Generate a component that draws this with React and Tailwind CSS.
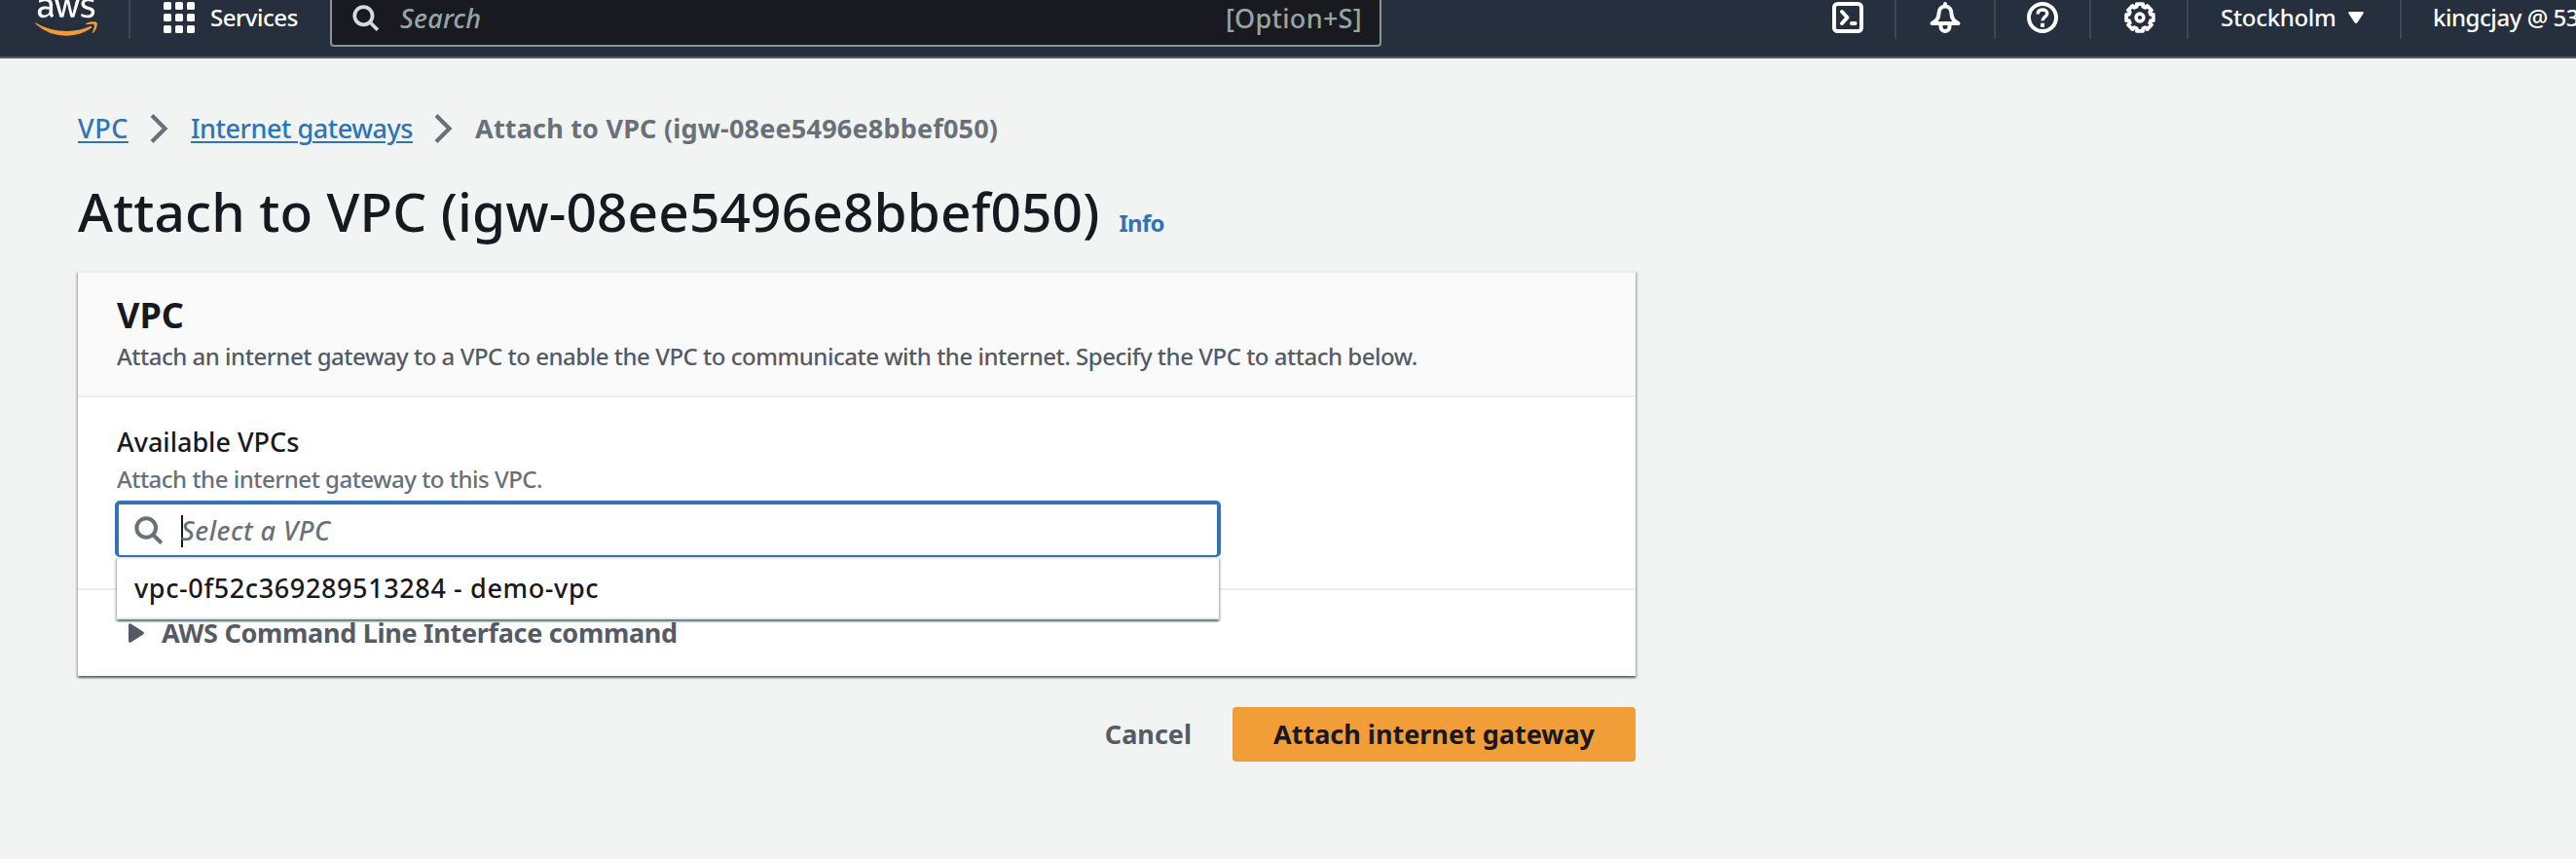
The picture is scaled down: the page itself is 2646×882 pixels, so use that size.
import React from 'react';
import { FaAws } from 'react-icons/fa6';

function Divider() {
  return <div className="h-10 w-[2px] shrink-0 bg-[#414750]" />;
}

function Chevron() {
  return (
    <svg width="20" height="30" viewBox="0 0 20 30" fill="none" stroke="#687078" strokeWidth="4.2">
      <path d="M2 1.5 L15.5 15 L2 28.5" />
    </svg>
  );
}

function SearchIcon({ className }) {
  return (
    <svg width="30" height="30" viewBox="0 0 30 30" fill="none" stroke="currentColor" strokeWidth="4" className={className}>
      <circle cx="12.2" cy="12" r="9.8" />
      <path d="M19.2 19 L27.8 27.6" />
    </svg>
  );
}

function GridIcon() {
  const cells = [0, 12, 24];
  return (
    <svg width="32" height="32" viewBox="0 0 32 32" fill="#fff">
      {cells.map((y) => cells.map((x) => <rect key={`${x}-${y}`} x={x} y={y} width="8" height="8" rx="1.6" />))}
    </svg>
  );
}

function LineIcon({ children }) {
  return (
    <svg
      width="32"
      height="32"
      viewBox="0 0 32 32"
      fill="none"
      stroke="#fff"
      strokeWidth="4"
      strokeLinecap="round"
      strokeLinejoin="round"
      className="block shrink-0 overflow-visible"
    >
      {children}
    </svg>
  );
}

function TerminalIcon() {
  return (
    <LineIcon>
      <rect x="2" y="2" width="28" height="28" rx="3.5" />
      <path d="M10 10 L15.5 16 L10 22" />
      <path d="M20 22 H23.5" />
    </LineIcon>
  );
}

function BellIcon() {
  return (
    <LineIcon>
      <path d="M16 4 V2" />
      <path d="M2.5 22 C7.5 19.5 9.5 16.5 9.5 12 C9.5 7.5 12.2 4.4 16 4.4 C19.8 4.4 22.5 7.5 22.5 12 C22.5 16.5 24.5 19.5 29.5 22 Z" />
      <path d="M11.5 23 V25.5 A4.5 4.5 0 0 0 20.5 25.5 V23" />
    </LineIcon>
  );
}

function HelpIcon() {
  return (
    <LineIcon>
      <circle cx="16" cy="16" r="14" />
      <path d="M11.2 12.4 C11.2 9.4 13.2 8 16 8 C18.8 8 20.8 9.6 20.8 12 C20.8 15.4 16 15.4 16 19.2" strokeWidth="3.4" strokeLinecap="butt" />
      <path d="M16 21.8 V25.8" strokeLinecap="butt" />
    </LineIcon>
  );
}

const gearPoints = Array.from({ length: 8 })
  .flatMap((_, k) =>
    [
      [-16, 11.6],
      [-13, 14.2],
      [13, 14.2],
      [16, 11.6],
    ].map(([offset, radius]) => {
      const a = ((k * 45 + offset) * Math.PI) / 180;
      return `${(16 + radius * Math.sin(a)).toFixed(2)},${(16 - radius * Math.cos(a)).toFixed(2)}`;
    })
  )
  .join(' ');

function GearIcon() {
  return (
    <LineIcon>
      <polygon points={gearPoints} strokeWidth="3.8" />
      <circle cx="16" cy="16" r="3.9" strokeWidth="3.6" />
    </LineIcon>
  );
}

function AwsLogo() {
  return (
    <div className="ml-9 h-10 w-16 shrink-0">
      <div className="h-5 overflow-hidden text-white">
        <FaAws className="-mt-2 h-[51px] w-16" />
      </div>
      <div className="h-5 overflow-hidden text-[#ef9c38]">
        <FaAws className="-mt-7 h-[51px] w-16" />
      </div>
    </div>
  );
}

function TopBar() {
  return (
    <header className="flex h-[60px] items-start overflow-hidden border-b-2 border-[#545b64] bg-[#262f3e] text-2xl font-medium text-white">
      <AwsLogo />
      <div className="ml-8 flex">
        <Divider />
      </div>
      <div className="ml-[34px] flex h-9 w-[171px] shrink-0 items-center gap-4">
        <GridIcon />
        <span className="tracking-[-0.45px]">Services</span>
      </div>
      <div className="h-12 w-[1080px] shrink-0 rounded-b-[4px] border-2 border-t-0 border-[#879596] bg-[#191a1f]">
        <div className="flex h-9 items-center pt-px pr-[18px] pl-[21px] text-[27px] text-[#95a5a6]">
          <SearchIcon className="size-7 text-[#d5dbdb]" />
          <span className="ml-[21px] tracking-[0.2px] italic">Search</span>
          <span className="ml-auto tracking-[0.3px]">[Option+S]</span>
        </div>
      </div>
      <div className="flex h-10 shrink-0">
        <div className="ml-[463px] flex h-9 items-center">
          <TerminalIcon />
        </div>
        <div className="ml-8 flex">
          <Divider />
        </div>
        <div className="ml-[34px] flex h-9 items-center">
          <BellIcon />
        </div>
        <div className="ml-[34px] flex">
          <Divider />
        </div>
        <div className="ml-8 flex h-9 items-center">
          <HelpIcon />
        </div>
        <div className="ml-8 flex">
          <Divider />
        </div>
        <div className="ml-[34px] flex h-9 items-center">
          <GearIcon />
        </div>
        <div className="ml-8 flex">
          <Divider />
        </div>
        <div className="ml-[33px] flex h-9 w-[184px] items-center">
          <span className="w-[131px] tracking-[-0.3px]">Stockholm</span>
          <svg width="16" height="12" viewBox="0 0 16 12" fill="#fff">
            <path d="M1.2 0 H14.8 Q16.4 0.4 15.6 1.8 L9.4 11.2 Q8 12.6 6.6 11.2 L0.4 1.8 Q-0.4 0.4 1.2 0 Z" />
          </svg>
        </div>
        <Divider />
        <div className="ml-8 flex h-9 items-center tracking-[-0.45px] whitespace-nowrap">kingcjay @ 53</div>
      </div>
    </header>
  );
}

function Breadcrumbs() {
  return (
    <nav className="flex h-10 items-center text-[27px] text-[#687078]">
      <a className="w-[52px] tracking-[0.6px] text-[#2f73b8] underline decoration-2 underline-offset-[3px]">VPC</a>
      <span className="ml-[22px]">
        <Chevron />
      </span>
      <a className="ml-[22px] w-[229px] tracking-[-0.45px] whitespace-nowrap text-[#2f73b8] underline decoration-2 underline-offset-[3px]">
        Internet gateways
      </a>
      <span className="ml-[21px]">
        <Chevron />
      </span>
      <span className="ml-[22px] font-bold tracking-[0.2px]">Attach to VPC (igw-08ee5496e8bbef050)</span>
    </nav>
  );
}

function VpcSelect() {
  return (
    <div className="relative -ml-[2px] h-[58px] w-[1136px] rounded-[5px] border-4 border-b-2 border-[#2f73b8] bg-white">
      <div className="flex h-[54px] items-center pl-4 text-[27px] text-[#687078]">
        <SearchIcon />
        <span className="ml-[18px] h-[33px] w-[2px] bg-[#16191f]" />
        <span className="-ml-[2px] tracking-[0.5px] italic">Select a VPC</span>
      </div>
      <div className="absolute top-[54px] -left-[2px] flex h-16 w-[1132px] items-center border-y-2 border-[#eaeded] bg-white pl-[18px] text-[27px] text-[#16191f] shadow-[0_2px_2px_0_rgba(0,28,36,0.5),2px_2px_2px_0_rgba(0,28,36,0.15),-2px_2px_2px_0_rgba(0,28,36,0.15)]">
        <span className="tracking-[0.62px]">vpc-0f52c369289513284 - demo-vpc</span>
      </div>
    </div>
  );
}

function VpcCard() {
  return (
    <section className="h-[416px] w-[1600px] border-t-2 border-[#eaeded] bg-white shadow-[0_2px_2px_0_rgba(0,28,36,0.5),2px_2px_2px_0_rgba(0,28,36,0.15),-2px_2px_2px_0_rgba(0,28,36,0.15)]">
      <div className="h-32 border-b-2 border-[#eaeded] bg-[#fafafa] px-10 pt-[22px]">
        <h2 className="text-[36px] leading-[44px] font-bold text-[#16191f]">VPC</h2>
        <p className="mt-[2px] text-2xl leading-9 tracking-[-0.48px] text-[#545b64]">
          Attach an internet gateway to a VPC to enable the VPC to communicate with the internet. Specify the VPC to attach below.
        </p>
      </div>
      <div className="h-[198px] border-b-2 border-[#eaeded] px-10 pt-[26px]">
        <label className="block text-[27px] leading-10 text-[#16191f]">Available VPCs</label>
        <p className="mb-1 text-2xl leading-9 tracking-[-0.5px] text-[#687078]">Attach the internet gateway to this VPC.</p>
        <VpcSelect />
      </div>
      <div className="flex items-center pt-6 pl-[52px] text-[27px] leading-10 font-bold text-[#545b64]">
        <svg width="16" height="20" viewBox="0 0 16 20" fill="#545b64">
          <path d="M0 1.5 Q0.4 -0.6 2.4 0.6 L15 8.6 Q16.6 10 15 11.4 L2.4 19.4 Q0.4 20.6 0 18.5 Z" />
        </svg>
        <span className="ml-[18px] tracking-[-0.3px]">AWS Command Line Interface command</span>
      </div>
    </section>
  );
}

export default function App() {
  return (
    <div className="h-[882px] w-[2646px] overflow-hidden bg-[#f2f4f3] font-['Noto_Sans','Open_Sans',sans-serif] font-medium">
      <TopBar />
      <main className="w-[1680px] pt-[52px] pl-20">
        <Breadcrumbs />
        <div className="mt-[29px] mb-[25px] flex h-[72px] items-baseline">
          <h1 className="text-[55px] leading-[72px] font-medium tracking-[0.12px] whitespace-nowrap text-[#16191f]">
            Attach to VPC (igw-08ee5496e8bbef050)
          </h1>
          <a className="ml-[20px] text-2xl font-bold tracking-[-0.7px] text-[#2f73b8]">Info</a>
        </div>
        <VpcCard />
        <div className="mt-8 flex h-14 items-center justify-end text-[27px] font-bold">
          <button className="text-[#545b64]">Cancel</button>
          <button className="ml-[42px] h-14 w-[414px] rounded-[4px] bg-[#f19e38] text-[#16191f]">Attach internet gateway</button>
        </div>
      </main>
    </div>
  );
}
